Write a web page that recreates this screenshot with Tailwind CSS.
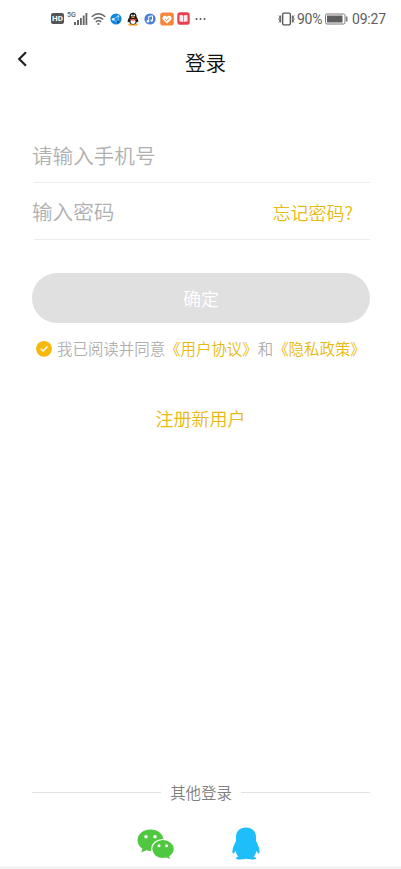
<!DOCTYPE html>
<html lang="zh-CN">
<head>
<meta charset="utf-8">
<meta name="viewport" content="width=device-width, initial-scale=1">
<title>登录</title>
<script src="https://cdn.jsdelivr.net/npm/@tailwindcss/browser@4"></script>
</head>
<body class="bg-white">
<div class="flex h-[869px] w-[401px] flex-col overflow-hidden bg-white font-['Noto_Sans_CJK_SC_DemiLight','Noto_Sans_CJK_SC',sans-serif] font-[350]">

  <!-- Status bar -->
  <header class="flex h-[37px] shrink-0 items-center pl-[51px] pr-[15px] font-[Roboto,sans-serif] font-normal text-[#5e5e5e]">
    <div class="flex h-[11px] w-[13px] items-center justify-center rounded-[2px] bg-[#555] text-[8px] leading-none font-bold text-white">HD</div>
    <div class="ml-[3px] h-4 text-[7px] leading-[9px] font-medium">5G</div>
    <svg class="-ml-[2px]" width="14" height="14" viewBox="0 0 14 14" fill="#666"><path d="M0 10h2v3H0zM3 8h2v5H3zM6 6h1.800v7H6zM8.800 3.500h1.800V13H8.800zM11.500 1h1.800v12h-1.800z"/></svg>
    <svg class="ml-[3px]" width="15" height="14" viewBox="0 0 15 14" fill="none" stroke="#666" stroke-width="1.400"><path d="M.7 4.800Q7.500-1.200 14.300 4.800M2.800 7.500q4.700-4.200 9.400 0M4.800 10q2.700-2.400 5.400 0"/><circle cx="7.500" cy="12" r="1.100" fill="#666" stroke="none"/></svg>
    <svg class="ml-[4px]" width="12" height="12" viewBox="0 0 12 12"><circle cx="6" cy="6" r="5.600" fill="#1687dc"/><path d="M3 6.500 8.300 2.800 8 9.200z" fill="none" stroke="#8bd5ff" stroke-width=".9"/><circle cx="3.200" cy="6.300" r="1.300" fill="#d5f2ff"/><circle cx="8.300" cy="3.200" r="1" fill="#a6e1ff"/><circle cx="8" cy="8.800" r="1.100" fill="#063b75"/></svg>
    <svg class="ml-[5px]" width="12" height="14" viewBox="0 0 12 14"><ellipse cx="3.800" cy="12.500" rx="2.500" ry="1.200" fill="#f5a623"/><ellipse cx="8.200" cy="12.500" rx="2.500" ry="1.200" fill="#f5a623"/><path d="M6 .8c-2.600 0-3.700 2-3.600 4.300C1.500 6.500.3 8.800.8 10.200c.3.500 1-.3 1.300-.8.4 1.900 1.900 3 3.900 3s3.500-1.100 3.900-3c.3.500 1 1.300 1.300.8.500-1.400-.7-3.700-1.600-5.100C9.700 2.800 8.600.8 6 .8z" fill="#161616"/><ellipse cx="6" cy="9.500" rx="2.500" ry="2.500" fill="#fff"/><path d="M2.300 6.300q3.700 2.400 7.400 0v1.300q-3.700 2.200-7.400 0z" fill="#e32b26"/><circle cx="4.800" cy="3.400" r=".9" fill="#fff"/><circle cx="7.200" cy="3.400" r=".9" fill="#fff"/><ellipse cx="6" cy="5.300" rx="1.900" ry=".7" fill="#f5a623"/></svg>
    <svg class="ml-[5px]" width="12" height="12" viewBox="0 0 12 12"><circle cx="6" cy="6" r="5.600" fill="#4a7fdb"/><path d="M4.700 8.300V3.500L8.500 2.800v4.800" fill="none" stroke="#fff" stroke-width="1"/><circle cx="3.900" cy="8.300" r="1.200" fill="#fff"/><circle cx="7.700" cy="7.600" r="1.200" fill="#fff"/></svg>
    <svg class="ml-[4px]" width="14" height="14" viewBox="0 0 14 14"><rect x=".2" y=".5" width="13.600" height="13" rx="2.800" fill="#f5873a"/><path d="M7 11.500 3 7.700C1.200 5.500 4.300 2.300 7 4.700c2.700-2.400 5.800.8 4 3z" fill="#fff"/><path d="m5 7.300 1.600 1.300L9.300 6" fill="none" stroke="#f5873a" stroke-width="1"/></svg>
    <svg class="ml-[3px]" width="13" height="13" viewBox="0 0 13 13"><rect x=".3" y=".3" width="12.400" height="12.400" rx="2.800" fill="#e8404c"/><path d="M2.500 3.300q2-.6 3.700.2v6.400q-1.700-.8-3.700-.3zM6.800 3.500q1.700-.8 3.700-.2v6.300q-2-.5-3.700.3z" fill="#fff" opacity=".9"/></svg>
    <svg class="ml-[5px]" width="11" height="4" viewBox="0 0 11 4" fill="#555"><circle cx="1.500" cy="2" r="1"/><circle cx="5.500" cy="2" r="1"/><circle cx="9.500" cy="2" r="1"/></svg>

    <div class="ml-auto flex items-center">
      <svg width="17" height="14" viewBox="0 0 17 14" fill="none" stroke="#555" stroke-width="1.300"><rect x="4.700" y="1.200" width="7.600" height="11.600" rx="1"/><path d="m.8 3.500 1.400 1.500-1.400 2 1.400 2-1.400 1.500M2.700 3.500v7M16.200 3.500 14.800 5l1.400 2-1.400 2 1.400 1.500M14.300 3.500v7" stroke-width="1"/></svg>
      <span class="ml-[2px] w-[25px] text-[14px] leading-4 tracking-[-0.3px]">90%</span>
      <svg class="ml-[3px]" width="23" height="12" viewBox="0 0 23 12"><rect x=".5" y="1" width="19.500" height="10" rx="1.500" fill="none" stroke="#777"/><rect x="2" y="2.500" width="15.500" height="7" fill="#5e5e5e"/><path d="M21.800 3.500v5" stroke="#666" stroke-width="1.300"/></svg>
      <span class="ml-[4px] w-[34px] text-[14px] leading-4 tracking-[-0.2px] whitespace-nowrap">09:27</span>
    </div>
  </header>

  <!-- Title bar -->
  <nav class="grid h-[50px] shrink-0 grid-cols-[32px_1fr_22px] items-center">
    <button class="-mt-[7px] flex justify-end pr-[5px]" aria-label="返回">
      <svg width="10" height="16" viewBox="0 0 10 16" fill="none" stroke="#222" stroke-width="2.200"><path d="M9 1.200 2.200 8 9 14.800"/></svg>
    </button>
    <h1 class="text-center text-[20.6px] leading-[30px] font-[350] text-[#111]">登录</h1>
  </nav>

  <!-- Login form -->
  <main class="flex flex-col px-8 pt-[40px]">
    <div class="flex h-14 items-center pt-px text-[20.6px] text-[#b0b0b0]">请输入手机号</div>
    <div class="ml-[2px] -mr-px -mt-px h-px bg-[#ececec]"></div>
    <div class="flex h-14 items-center justify-between pr-[16px]">
      <span class="text-[20.6px] text-[#b0b0b0]">输入密码</span>
      <a class="pt-[2px] text-[18px] text-[#e8b90f]">忘记密码?</a>
    </div>
    <div class="ml-[2px] -mr-px h-px bg-[#ececec]"></div>
    <button class="mt-[33px] -mr-px h-[50px] rounded-full bg-[#e0e0e0] text-[18px] font-[350] text-white">确定</button>
    <div class="mt-[14px] flex h-6 items-center pl-1 text-[15.45px] whitespace-nowrap text-[#b0b0b0]">
      <svg class="mr-[5px] shrink-0" width="16" height="16" viewBox="0 0 16 16"><circle cx="8" cy="7.900" r="7.900" fill="#f6b90c"/><path d="m4.700 7.700 2.400 2.300 4.400-4.500" fill="none" stroke="#fff" stroke-width="1.500"/></svg>
      <span>我已阅读并同意</span><a class="text-[#e8b90f]">《用户协议》</a><span>和</span><a class="text-[#e8b90f]">《隐私政策》</a>
    </div>
    <a class="mt-[44px] text-center text-[18px] leading-[26px] text-[#e8b90f]">注册新用户</a>
  </main>

  <!-- Other login methods -->
  <footer class="mt-auto">
    <div class="flex items-center pl-8 pr-[31px] text-[15.45px] leading-6 text-[#808080]">
      <span class="h-px flex-1 bg-[#e2e2e2]"></span><span class="px-[9px]">其他登录</span><span class="h-px flex-1 bg-[#e2e2e2]"></span>
    </div>
    <div class="mt-[23px] flex h-[39px] items-start pl-[137px]">
      <svg class="mt-[2px]" width="38" height="32" viewBox="0 0 38 32" fill="#4fc83f"><path d="M13.500.5C6.200.5.500 5.200.500 11.200c0 3.500 1.900 6.400 4.900 8.400L4.300 23.500l4.900-2.300c1.400.5 2.800.7 4.300.7 7.300 0 13-4.700 13-10.700S20.800.5 13.500.5z"/><path d="M26 10.500c-6.300 0-11.300 4.300-11.300 9.600s5 9.500 11.300 9.500c1.200 0 2.500-.2 3.600-.5l4.300 2-1-3.600c2.600-1.700 4.400-4.400 4.400-7.400 0-5.300-5-9.600-11.300-9.600z" stroke="#fff" stroke-width="1.200"/><g fill="#fff"><circle cx="9" cy="7.800" r="1.800"/><circle cx="18" cy="7.800" r="1.800"/><circle cx="22" cy="16.700" r="1.500"/><circle cx="29.600" cy="16.700" r="1.500"/></g></svg>
      <svg class="ml-[57px]" width="28" height="33" viewBox="0 0 28 33" fill="#1dbefa"><path d="M14 .5C8 .5 4 4.300 4 10v4C2.300 17.300.4 21 .4 24.500c0 2 .8 2.800 1.600 1.500l1.500-2c.7 2.700 1.600 4.300 3 5.800-2.300.4-2.700 1.300-2.500 1.900.4 1 8 .8 10 .1 2 .7 9.600.9 10-.1.200-.6-.2-1.500-2.500-1.900 1.400-1.500 2.300-3.100 3-5.800L26 26c.8 1.300 1.600.5 1.600-1.500C27.600 21 25.700 17.300 24 14v-4C24 4.300 20 .5 14 .5z"/></svg>
    </div>
    <div class="h-[3px] bg-[#f4f4f4]"></div>
  </footer>
</div>
</body>
</html>
